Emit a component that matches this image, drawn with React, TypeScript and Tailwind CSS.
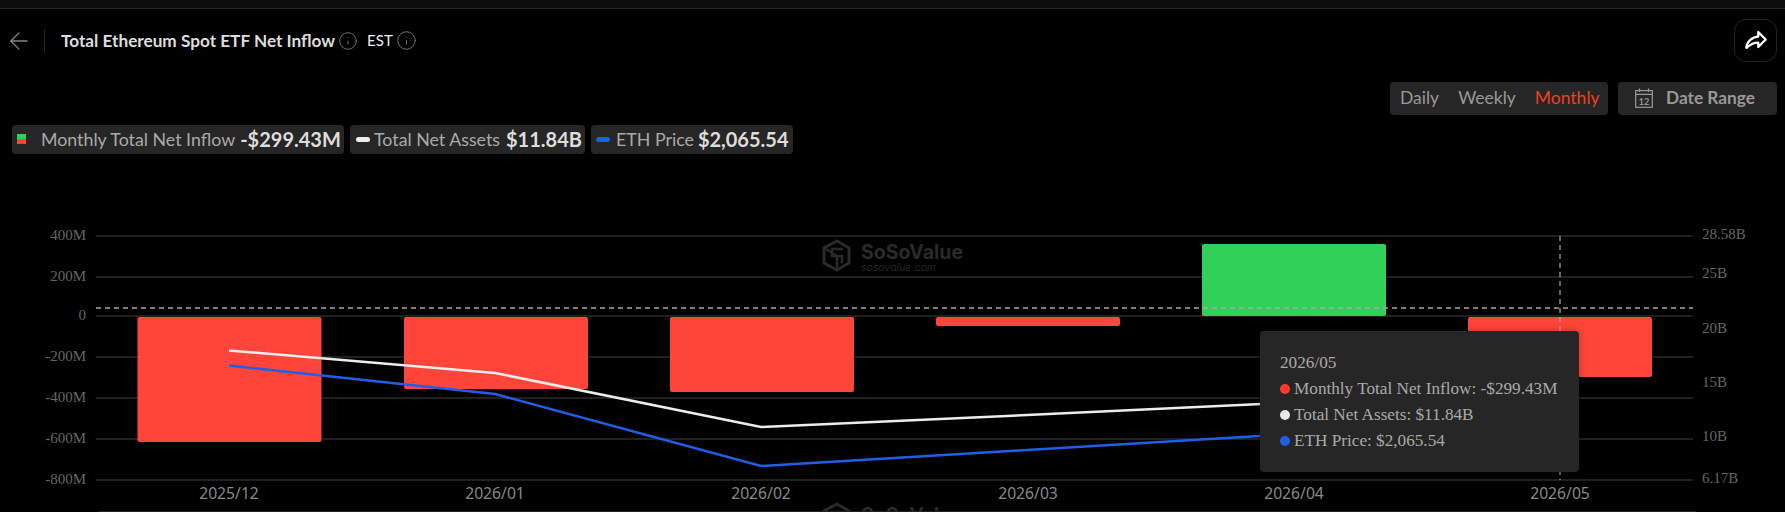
import { ArrowLeft, Info } from "lucide-react";
import { PiShareFatBold } from "react-icons/pi";

const LEFT_TICKS = [
  { label: "400M", y: 236 },
  { label: "200M", y: 277 },
  { label: "0", y: 316 },
  { label: "-200M", y: 357 },
  { label: "-400M", y: 398 },
  { label: "-600M", y: 439 },
  { label: "-800M", y: 480 },
];

const RIGHT_TICKS = [
  { label: "28.58B", y: 234 },
  { label: "25B", y: 273 },
  { label: "20B", y: 328 },
  { label: "15B", y: 382 },
  { label: "10B", y: 436 },
  { label: "6.17B", y: 478 },
];

const MONTHS = [
  { label: "2025/12", x: 229 },
  { label: "2026/01", x: 495 },
  { label: "2026/02", x: 761 },
  { label: "2026/03", x: 1028 },
  { label: "2026/04", x: 1294 },
  { label: "2026/05", x: 1560 },
];

const BARS = [
  { x: 137.5, y: 317, h: 125, up: false },
  { x: 404, y: 317, h: 72, up: false },
  { x: 670, y: 317, h: 75, up: false },
  { x: 936, y: 317, h: 9, up: false },
  { x: 1202, y: 244, h: 72, up: true },
  { x: 1468, y: 317, h: 60, up: false },
];

function Watermark({ y }: { y: number }) {
  return (
    <g transform={`translate(0 ${y})`} className="fill-none stroke-[#2a2a2a]">
      <polygon points="837,241 849,248 849,263 837,270 824,263 824,248" strokeWidth="3" />
      <path d="M843 249 L832 249 L832 256 L842 256 L842 263 M824 248 L837 256 L837 269" strokeWidth="2.5" />
      <text x="861" y="259" stroke="none" className="fill-[#2a2a2a] font-['Inter',sans-serif] text-[19.5px] font-bold">
        SoSoValue
      </text>
      <text x="861" y="271" stroke="none" className="fill-[#262626] font-['Inter',sans-serif] text-[10.5px] italic">
        sosovalue.com
      </text>
    </g>
  );
}

function Chart() {
  return (
    <div className="relative min-h-0 flex-1">
      <svg viewBox="0 154 1785 358" className="block h-[358px] w-[1785px]">
        <Watermark y={0} />
        <Watermark y={263} />

        {LEFT_TICKS.map((t) => (
          <g key={t.label}>
            <line x1="96" x2="1693" y1={t.y} y2={t.y} className="stroke-[#2b2b2b]" strokeWidth="1.5" />
            <text
              x="86"
              y={t.y + 4}
              textAnchor="end"
              className="fill-[#666666] font-['Liberation_Serif',serif] text-[15px]"
            >
              {t.label}
            </text>
          </g>
        ))}

        {RIGHT_TICKS.map((t) => (
          <text
            key={t.label}
            x="1702"
            y={t.y + 5}
            className="fill-[#666666] font-['Liberation_Serif',serif] text-[15px]"
          >
            {t.label}
          </text>
        ))}

        {BARS.map((b) => (
          <rect
            key={b.x}
            x={b.x}
            y={b.y}
            width="184"
            height={b.h}
            rx="2"
            className={b.up ? "fill-[#30d158]" : "fill-[#ff4539]"}
          />
        ))}

        {/* net assets and price */}
        <polyline
          points="229,350.5 495,373 761,427 1027,415 1293,402.5 1559,390"
          className="fill-none stroke-[#ececec]"
          strokeWidth="2.5"
        />
        <polyline
          points="229,365.5 495,394 761,466 1027,450 1293,434 1559,418"
          className="fill-none stroke-[#1f5fe8]"
          strokeWidth="2.5"
        />

        {/* crosshair */}
        <line x1="96" x2="1693" y1="308" y2="308" className="stroke-[#a8a8a8]" strokeWidth="1.5" strokeDasharray="5 4" />
        <line x1="1560" x2="1560" y1="236" y2="480" className="stroke-[#a8a8a8]" strokeWidth="1.2" strokeDasharray="5 4" />

        {MONTHS.map((m) => (
          <text
            key={m.label}
            x={m.x}
            y="499"
            textAnchor="middle"
            className="fill-[#888888] font-['Noto_Sans',sans-serif] text-[15.7px]"
          >
            {m.label}
          </text>
        ))}

        <line x1="99" x2="1696" y1="511.5" y2="511.5" className="stroke-[#222222]" />
      </svg>

      {/* Tooltip */}
      <div className="absolute left-[1260px] top-[177px] h-[141px] w-[319px] rounded bg-[#262626] pl-5 pt-[19px] font-['Liberation_Serif',serif] text-[17.2px] leading-[26px] text-[#aaaaaa] shadow-[0_0_8px_rgba(0,0,0,0.25)]">
        <div>2026/05</div>
        <div className="flex items-center gap-[4px]">
          <span className="size-[10px] rounded-full bg-[#ff3b30]" />
          Monthly Total Net Inflow: -$299.43M
        </div>
        <div className="flex items-center gap-[4px]">
          <span className="size-[10px] rounded-full bg-[#e8e8e8]" />
          Total Net Assets: $11.84B
        </div>
        <div className="flex items-center gap-[4px]">
          <span className="size-[10px] rounded-full bg-[#1f5fe8]" />
          ETH Price: $2,065.54
        </div>
      </div>
    </div>
  );
}

function CalendarIcon() {
  return (
    <svg viewBox="0 0 18 20" className="h-5 w-[18px] fill-none stroke-[#999999]" strokeWidth="1.2">
      <rect x="0.7" y="2.6" width="16.6" height="16.7" />
      <path d="M0.7 6.4H17.3M4.5 0.5V4M13.5 0.5V4" />
      <text x="9" y="16.6" textAnchor="middle" stroke="none" className="fill-[#999999] font-['Lato',sans-serif] text-[9px] font-bold">
        12
      </text>
    </svg>
  );
}

export default function App() {
  return (
    <div className="flex h-[512px] w-[1785px] flex-col overflow-hidden bg-black font-['Lato',sans-serif]">
      <div className="h-[9px] shrink-0 border-b border-[#262626] bg-[#0d0d0d]" />

      {/* Title bar */}
      <div className="mt-[10px] flex h-[43px] items-center justify-between pl-[5px] pr-2">
        <div className="flex items-center">
          <ArrowLeft className="size-[28px] text-[#888888]" strokeWidth={1.1} />
          <div className="ml-[11px] mr-[16px] h-[24px] w-px bg-[#262626]" />
          <h1 className="text-[17.2px] font-bold text-[#dddddd]">Total Ethereum Spot ETF Net Inflow</h1>
          <Info className="ml-[3px] size-[20px] text-[#777777]" strokeWidth={1.1} />
          <span className="ml-[9px] text-[15px] text-[#eeeeee]">EST</span>
          <Info className="ml-[3px] size-[21px] text-[#777777]" strokeWidth={1.1} />
        </div>
        <button className="flex size-[43px] items-center justify-center rounded-xl border border-[#222222] text-white">
          <PiShareFatBold className="size-[24px]" />
        </button>
      </div>

      {/* Range controls */}
      <div className="mt-5 flex justify-end gap-[10px] pr-2">
        <div className="flex h-[33px] w-[218px] items-center gap-[19px] rounded bg-[#262626] pb-px pl-[10px] text-[17.5px] text-[#999999]">
          <span>Daily</span>
          <span>Weekly</span>
          <span className="text-[#f0401f]">Monthly</span>
        </div>
        <div className="flex h-[33px] w-[159px] items-center gap-[13px] rounded bg-[#262626] pb-px pl-[17px] text-[17.3px] font-bold text-[#999999]">
          <CalendarIcon />
          <span>Date Range</span>
        </div>
      </div>

      {/* Legend chips */}
      <div className="mt-[10px] flex h-[29px] shrink-0 gap-[6px] pl-3">
        <div className="flex w-[332px] items-center rounded bg-[#262626] pb-px pl-[5px]">
          <span className="mr-[15px] flex w-[9px] flex-col">
            <span className="h-[5px] bg-[#30d158]" />
            <span className="h-[5px] bg-[#ff4539]" />
          </span>
          <span className="text-[17.8px] text-[#aaaaaa]">Monthly Total Net Inflow</span>
          <span className="ml-[5px] text-[20px] font-bold text-[#dddddd]">-$299.43M</span>
        </div>
        <div className="flex w-[235px] items-center rounded bg-[#262626] pb-px pl-[6px]">
          <span className="mr-[4px] h-[5px] w-[14px] rounded-full bg-[#eeeeee]" />
          <span className="text-[17.8px] text-[#aaaaaa]">Total Net Assets</span>
          <span className="ml-[6px] text-[20px] font-bold text-[#dddddd]">$11.84B</span>
        </div>
        <div className="flex w-[202px] items-center rounded bg-[#262626] pb-px pl-[5px]">
          <span className="mr-[6px] h-[5px] w-[14px] rounded-full bg-[#1f5fe8]" />
          <span className="text-[17.8px] text-[#aaaaaa]">ETH Price</span>
          <span className="ml-[4px] text-[20px] font-bold text-[#dddddd]">$2,065.54</span>
        </div>
      </div>

      <Chart />
    </div>
  );
}
